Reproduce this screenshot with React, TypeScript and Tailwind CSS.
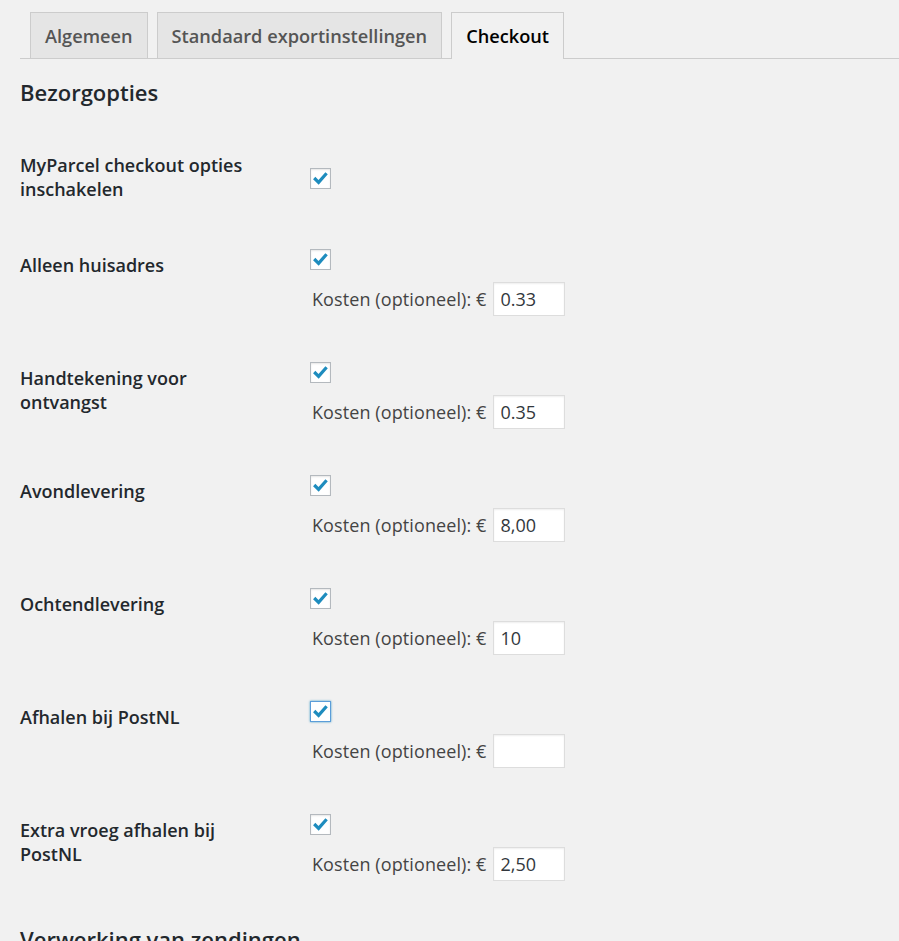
import React from "react";

interface OptionRow {
  label: string;
  cost: string;
  focused?: boolean;
}

const ROWS: OptionRow[] = [
  { label: "Alleen huisadres", cost: "0.33" },
  { label: "Handtekening voor ontvangst", cost: "0.35" },
  { label: "Avondlevering", cost: "8,00" },
  { label: "Ochtendlevering", cost: "10" },
  { label: "Afhalen bij PostNL", cost: "", focused: true },
  { label: "Extra vroeg afhalen bij PostNL", cost: "2,50" },
];

function Checkbox({ focused = false }: { focused?: boolean }) {
  return (
    <div
      className={
        focused
          ? "w-[21px] h-[21px] bg-white border border-[#5b9dd9] shadow-[0_0_2px_rgba(30,140,190,0.8)] flex items-center justify-center"
          : "w-[21px] h-[21px] bg-white border border-[#b4b9be] shadow-[inset_0_1px_2px_rgba(0,0,0,0.1)] flex items-center justify-center"
      }
    >
      <svg width="19" height="19" viewBox="0 0 19 19">
        <polyline
          points="3.2,9 7.6,13.4 15.6,4.2"
          fill="none"
          stroke="#1e8cbe"
          strokeWidth="3.2"
          strokeLinejoin="miter"
        />
      </svg>
    </div>
  );
}

function CostField({ value }: { value: string }) {
  return (
    <div className="mt-[12px] flex items-center gap-[6px] pl-[2px]">
      <span className="text-[18px] leading-[24px] text-[#444] tracking-[0.1px]">Kosten (optioneel): €</span>
      <input
        readOnly
        value={value}
        className="w-[72px] h-[34px] bg-white border border-[#ddd] shadow-[inset_0_1px_2px_rgba(0,0,0,0.07)] px-[7px] text-[18px] text-[#32373c] outline-none"
      />
    </div>
  );
}

function Tab({ label, active = false }: { label: string; active?: boolean }) {
  return (
    <div
      className={
        active
          ? "h-[47px] -mb-px px-[14px] flex items-center border border-b-0 border-[#ccc] bg-[#f1f1f1] text-[18.2px] leading-[24px] font-semibold text-black"
          : "h-[46px] px-[14px] flex items-center border border-b-0 border-[#ccc] bg-[#e5e5e5] text-[18.2px] leading-[24px] font-semibold text-[#555]"
      }
    >
      {label}
    </div>
  );
}

export default function App() {
  return (
    <div className="min-h-screen bg-[#f1f1f1] font-['Open_Sans',sans-serif] px-[20px] overflow-hidden">
      <div className="-mr-[20px] pt-[12px] pl-[10px] flex items-end gap-[9px] border-b border-[#ccc]">
        <Tab label="Algemeen" />
        <Tab label="Standaard exportinstellingen" />
        <Tab label="Checkout" active />
      </div>

      <h2 className="mt-[19px] text-[22px] leading-[28px] font-semibold text-[#23282d]">Bezorgopties</h2>

      <div className="flex pt-[47px] pb-[25px]">
        <div className="w-[290px] shrink-0">
          <div className="w-[236px] text-[18px] leading-[24px] font-semibold text-[#23282d]">
            MyParcel checkout opties inschakelen
          </div>
        </div>
        <div className="pt-[15px]">
          <Checkbox />
        </div>
      </div>

      {ROWS.map((row) => (
        <div key={row.label} className="flex py-[23px]">
          <div className="w-[290px] shrink-0 pt-[4px]">
            <div className="w-[236px] text-[18px] leading-[24px] font-semibold text-[#23282d]">{row.label}</div>
          </div>
          <div>
            <Checkbox focused={row.focused} />
            <CostField value={row.cost} />
          </div>
        </div>
      ))}

      <h2 className="mt-[21px] text-[22px] leading-[28px] font-semibold text-[#23282d]">
        Verwerking van zendingen
      </h2>
    </div>
  );
}
